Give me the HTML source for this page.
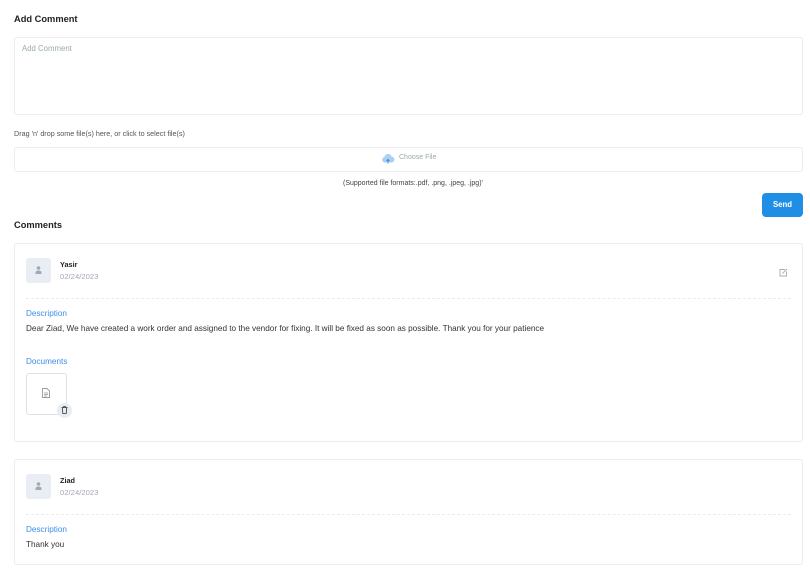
<!DOCTYPE html>
<html><head><meta charset="utf-8"><style>
*{margin:0;padding:0;box-sizing:border-box}
body{width:810px;height:572px;background:#fff;font-family:"Liberation Sans",sans-serif;position:relative;overflow:hidden;color:#222}
.a{position:absolute;white-space:nowrap}
.box{position:absolute;border:1px solid #eaecef;border-radius:3px;background:#fff}
.h{font-size:9.3px;font-weight:bold;color:#222}
.blue{color:#3b8ee8;font-size:8.2px}
.av{position:absolute;width:25px;height:25px;background:#e9edf4;border-radius:3px}
.dash{position:absolute;border-top:1px dashed #eaecef;height:0}
</style></head><body>
<div class="a h" style="left:14px;top:14px">Add Comment</div>
<div class="box" style="left:14px;top:37px;width:789px;height:78px"></div>
<div class="a" style="left:22px;top:44px;font-size:7.8px;color:#9aa">Add Comment</div>
<div class="a" style="left:14px;top:129px;font-size:7.2px;color:#555">Drag 'n' drop some file(s) here, or click to select file(s)</div>
<div class="box" style="left:14px;top:147px;width:789px;height:25px"></div>
<svg class="a" style="left:381px;top:154px" width="14" height="10" viewBox="0 0 14 10"><path d="M3.5 8.5a2.8 2.8 0 0 1 0-5.5 3.6 3.6 0 0 1 7-.4 2.8 2.8 0 0 1 0 5.9z" fill="#a9d1f3"/><path d="M7 9.5V5.5M5.5 7L7 5.5 8.5 7" stroke="#3b8ee8" stroke-width="1" fill="none"/></svg>
<div class="a" style="left:399px;top:154px;font-size:7px;color:#9aa">Choose File</div>
<div class="a" style="left:343px;top:180px;font-size:7px;color:#444">(Supported file formats:.pdf, .png, .jpeg, .jpg)'</div>
<div class="a" style="left:762px;top:193px;width:41px;height:24px;background:#1f8fe6;border-radius:4px;color:#fff;font-size:7.8px;font-weight:bold;text-align:center;line-height:24px">Send</div>
<div class="a h" style="left:14px;top:220px">Comments</div>

<div class="box" style="left:14px;top:243px;width:789px;height:199px"></div>
<div class="av" style="left:26px;top:258px"></div>
<svg class="a" style="left:35px;top:266px" width="7" height="8" viewBox="0 0 7 8"><circle cx="3.5" cy="2" r="1.8" fill="#a3a9b4"/><path d="M0.5 8v-1.5a3 2 0 0 1 6 0V8z" fill="#a3a9b4"/></svg>
<div class="a" style="left:60px;top:260px;font-size:7.3px;font-weight:bold;color:#222">Yasir</div>
<div class="a" style="left:60px;top:272px;font-size:7.7px;color:#a3a9b4">02/24/2023</div>
<svg class="a" style="left:779px;top:268px" width="9" height="9" viewBox="0 0 9 9"><path d="M6 1.5H1v6.5h6.5V3.5" stroke="#aab" stroke-width=".9" fill="none"/><path d="M3.5 5.5L8 1" stroke="#aab" stroke-width="1"/></svg>
<div class="dash" style="left:26px;top:298px;width:765px"></div>
<div class="a blue" style="left:26px;top:309px">Description</div>
<div class="a" style="left:26px;top:324px;font-size:8.2px;color:#333">Dear Ziad, We have created a work order and assigned to the vendor for fixing. It will be fixed as soon as possible. Thank you for your patience</div>
<div class="a blue" style="left:26px;top:357px">Documents</div>
<div class="box" style="left:26px;top:373px;width:41px;height:42px;border-color:#dfe2e6"></div>
<svg class="a" style="left:42px;top:388px" width="8" height="10" viewBox="0 0 8 10"><path d="M.5.5h4.5l2.5 2.5v6.5h-7z" stroke="#999" stroke-width=".9" fill="#fff"/><path d="M2 5h4M2 6.5h4M2 8h3" stroke="#999" stroke-width=".7"/></svg>
<div class="a" style="left:57px;top:403px;width:15px;height:15px;border-radius:50%;background:#e9edf3"></div>
<svg class="a" style="left:61px;top:406px" width="7" height="8" viewBox="0 0 7 8"><path d="M.5 1.5h6M2.5 1.5V.6h2v.9M1.3 1.5l.5 6h3.4l.5-6" stroke="#333" stroke-width=".8" fill="none"/></svg>

<div class="box" style="left:14px;top:459px;width:789px;height:106px"></div>
<div class="av" style="left:26px;top:474px"></div>
<svg class="a" style="left:35px;top:482px" width="7" height="8" viewBox="0 0 7 8"><circle cx="3.5" cy="2" r="1.8" fill="#a3a9b4"/><path d="M0.5 8v-1.5a3 2 0 0 1 6 0V8z" fill="#a3a9b4"/></svg>
<div class="a" style="left:60px;top:476px;font-size:7.3px;font-weight:bold;color:#222">Ziad</div>
<div class="a" style="left:60px;top:488px;font-size:7.7px;color:#a3a9b4">02/24/2023</div>
<div class="dash" style="left:26px;top:514px;width:765px"></div>
<div class="a blue" style="left:26px;top:525px">Description</div>
<div class="a" style="left:26px;top:540px;font-size:8.2px;color:#333">Thank you</div>
</body></html>
